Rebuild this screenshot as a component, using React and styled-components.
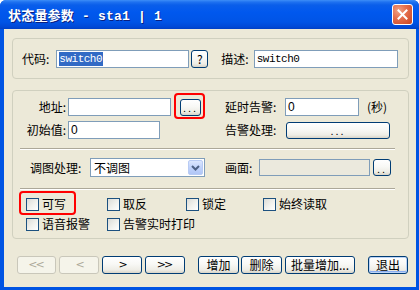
import React from 'react';
import styled, { createGlobalStyle } from 'styled-components';

const GlobalStyle = createGlobalStyle`
  html, body {
    margin: 0;
    padding: 0;
    background: #ffffff;
  }
  body {
    font-family: "Noto Sans CJK SC", sans-serif;
    font-size: 12px;
    color: #000;
  }
`;

const Window = styled.div`
  width: 419px;
  height: 290px;
  display: flex;
  flex-direction: column;
  background: #0054e3;
  border-radius: 6px 6px 0 0;
  overflow: hidden;
`;

const TitleBar = styled.div`
  height: 29px;
  flex: none;
  display: flex;
  align-items: center;
  justify-content: space-between;
  padding: 0 6px 0 8px;
  background: linear-gradient(
    to bottom,
    #3d8ef7 0px,
    #1f72f0 2px,
    #0a5eea 5px,
    #0058ee 12px,
    #0054e6 22px,
    #0048d6 27px,
    #003fc4 29px
  );
`;

const Title = styled.div`
  color: #ffffff;
  font-family: "Liberation Mono", "Noto Sans CJK SC", monospace;
  font-weight: bold;
  font-size: 13px;
  letter-spacing: 0.2px;
  text-shadow: 1px 1px 0 #0a1f80;
  white-space: pre;
`;

const CloseButton = styled.div`
  width: 21px;
  height: 21px;
  box-sizing: border-box;
  border: 1px solid #ffffff;
  border-radius: 3px;
  background: radial-gradient(circle at 30% 30%, #f0a386 0%, #e5704f 40%, #c9421f 100%);
  display: flex;
  align-items: center;
  justify-content: center;
`;

const Client = styled.div`
  flex: 1;
  margin: 0 3px 3px 4px;
  background: #ece9d8;
  padding: 9px 7px 0 8px;
  display: flex;
  flex-direction: column;
`;

const Group = styled.div`
  box-sizing: border-box;
  border: 1px solid #d0d0bf;
  border-radius: 4px;
  height: ${(p) => p.$h}px;
  margin-top: ${(p) => p.$mt || 0}px;
`;

const TopGroup = styled(Group)`
  display: flex;
  align-items: center;
  padding: 0 10px 0 9px;
`;

const MainGroup = styled(Group)`
  display: flex;
  flex-direction: column;
  padding: 7px 13px 0 7px;
`;

const Row = styled.div`
  display: flex;
  align-items: center;
  height: ${(p) => p.$h || 18}px;
  margin-top: ${(p) => p.$mt || 0}px;
  padding-left: ${(p) => p.$pl || 0}px;
`;

const Cell = styled.div`
  display: flex;
  align-items: center;
  width: ${(p) => (p.$w ? `${p.$w}px` : 'auto')};
  flex: ${(p) => (p.$w ? 'none' : '1')};
`;

const Label = styled.span`
  display: inline-block;
  width: ${(p) => (p.$w ? `${p.$w}px` : 'auto')};
  text-align: ${(p) => (p.$right ? 'right' : 'left')};
  margin-left: ${(p) => p.$ml || 0}px;
  margin-right: ${(p) => p.$mr || 0}px;
  white-space: nowrap;
  line-height: 16px;
  flex: none;
`;

const Field = styled.div`
  box-sizing: border-box;
  width: ${(p) => p.$w}px;
  height: ${(p) => p.$h || 18}px;
  margin-left: ${(p) => p.$ml || 0}px;
  border: 1px solid #7f9db9;
  background: ${(p) => (p.$disabled ? '#ebe9dd' : '#ffffff')};
  display: flex;
  align-items: center;
  padding-left: 2px;
  flex: none;
  font-family: ${(p) =>
    p.$mono ? '"Liberation Mono", monospace' : '"Liberation Sans", sans-serif'};
  font-size: ${(p) => (p.$mono ? '11px' : '12px')};
  letter-spacing: ${(p) => (p.$mono ? '-0.5px' : '0')};
  white-space: nowrap;
  overflow: hidden;
`;

const Selected = styled.span`
  background: #316ac5;
  color: #ffffff;
  line-height: 14px;
  padding-right: 1px;
`;

const Button = styled.div`
  box-sizing: border-box;
  position: relative;
  width: ${(p) => p.$w}px;
  height: ${(p) => p.$h || 18}px;
  margin-left: ${(p) => p.$ml || 0}px;
  border: 1px solid ${(p) => (p.$disabled ? '#c9c7ba' : '#003c74')};
  border-radius: 3px;
  background: ${(p) =>
    p.$disabled
      ? '#f5f4ea'
      : 'linear-gradient(to bottom, #ffffff 0%, #f8f8f5 45%, #eeede6 80%, #d8d4c8 100%)'};
  color: ${(p) => (p.$disabled ? '#aca899' : '#000000')};
  box-shadow: ${(p) =>
    p.$default ? 'inset 0 0 0 1px #bcd4f6, inset 0 -1px 0 1px #89adf0' : 'none'};
  display: flex;
  align-items: center;
  justify-content: center;
  flex: none;
  white-space: nowrap;
  line-height: 14px;
  font-size: 12px;
`;

const Dots = styled.span`
  font-family: "Liberation Sans", sans-serif;
  letter-spacing: 2px;
  font-size: 11px;
  margin-top: 2px;
`;

const Arrow = styled.span`
  font-family: "DejaVu Sans", sans-serif;
  font-size: 11px;
  letter-spacing: -2px;
  margin-left: ${(p) => (p.$double ? '-2px' : '0')};
`;

const Highlight = styled.div`
  position: absolute;
  left: ${(p) => p.$l}px;
  top: ${(p) => p.$t}px;
  right: ${(p) => p.$r}px;
  bottom: ${(p) => p.$b}px;
  border: 2px solid #ff0000;
  border-radius: 4px;
  pointer-events: none;
`;

const Anchor = styled.div`
  position: relative;
  display: flex;
  align-items: center;
  margin-left: ${(p) => p.$ml || 0}px;
`;

const Select = styled.div`
  box-sizing: border-box;
  width: ${(p) => p.$w}px;
  height: 19px;
  border: 1px solid #7f9db9;
  background: #ffffff;
  display: flex;
  align-items: center;
  justify-content: space-between;
  padding: 0 1px 0 3px;
  flex: none;
`;

const SelectArrow = styled.div`
  width: 15px;
  height: 15px;
  box-sizing: border-box;
  border: 1px solid #b8cbf4;
  border-radius: 2px;
  background: linear-gradient(to bottom, #dbe6fe 0%, #c1d3fb 50%, #b1c6f6 100%);
  display: flex;
  align-items: center;
  justify-content: center;
`;

const Separator = styled.div`
  height: 0;
  border-top: 1px solid #aca899;
  border-bottom: 1px solid #ffffff;
  margin-top: ${(p) => p.$mt}px;
`;

const CheckGrid = styled.div`
  display: grid;
  grid-template-columns: 81px 79px 77px 1fr;
  grid-auto-rows: 16px;
  row-gap: 4px;
  padding-left: 6px;
  margin-top: 6px;
`;

const CheckItem = styled.div`
  position: relative;
  display: flex;
  align-items: center;
  justify-self: start;
  grid-column: ${(p) => p.$col || 'auto'};
`;

const Box = styled.span`
  width: 13px;
  height: 13px;
  box-sizing: border-box;
  border: 1px solid #1c5180;
  background: linear-gradient(135deg, #dcdcd7 0%, #f2f2ee 55%, #ffffff 100%);
  margin-right: 3px;
  flex: none;
`;

const ButtonBar = styled.div`
  display: flex;
  align-items: center;
  margin-top: 17px;
  padding-left: 5px;
  gap: 3px;
`;

const Check = ({ children, col, marked }) => (
  <CheckItem $col={col}>
    <Box />
    <Label>{children}</Label>
    {marked && <Highlight $l={-7} $t={-5} $r={-10} $b={-3} />}
  </CheckItem>
);

export default function App() {
  return (
    <>
      <GlobalStyle />
      <Window>
        <TitleBar>
          <Title>状态量参数 - sta1 | 1</Title>
          <CloseButton>
            <svg width="11" height="11" viewBox="0 0 11 11">
              <path d="M1.5 1.5 L9.5 9.5 M9.5 1.5 L1.5 9.5" stroke="#ffffff" strokeWidth="2" strokeLinecap="square" />
            </svg>
          </CloseButton>
        </TitleBar>
        <Client>
          <TopGroup $h={41}>
            <Label>代码:</Label>
            <Field $w={133} $ml={7} $mono>
              <Selected>switch0</Selected>
            </Field>
            <Button $w={17} $ml={2}>?</Button>
            <Label $ml={13}>描述:</Label>
            <Field $w={144} $ml={5} $mono>switch0</Field>
          </TopGroup>

          <MainGroup $h={149} $mt={11}>
            <Row>
              <Cell $w={205}>
                <Label $w={46} $right>地址:</Label>
                <Field $w={103} $ml={2} />
                <Anchor $ml={9}>
                  <Button $w={21} $h={17}><Dots>...</Dots></Button>
                  <Highlight $l={-6} $t={-6} $r={-4} $b={-3} />
                </Anchor>
              </Cell>
              <Cell>
                <Label $w={60}>延时告警:</Label>
                <Field $w={74}>0</Field>
                <Label $ml={8}>(秒)</Label>
              </Cell>
            </Row>
            <Row $mt={5}>
              <Cell $w={205}>
                <Label $w={46} $right>初始值:</Label>
                <Field $w={92} $ml={2}>0</Field>
              </Cell>
              <Cell>
                <Label $w={61}>告警处理:</Label>
                <Button $w={104} $h={17}><Dots>...</Dots></Button>
              </Cell>
            </Row>

            <Separator $mt={9} />

            <Row $h={19} $mt={8} $pl={10}>
              <Cell $w={195}>
                <Label $w={60}>调图处理:</Label>
                <Select $w={115}>
                  <span>不调图</span>
                  <SelectArrow>
                    <svg width="9" height="6" viewBox="0 0 9 6">
                      <path d="M1 1 L4.5 4.5 L8 1" fill="none" stroke="#4d6185" strokeWidth="2" />
                    </svg>
                  </SelectArrow>
                </Select>
              </Cell>
              <Cell>
                <Label $w={34}>画面:</Label>
                <Field $w={111} $h={17} $disabled />
                <Button $w={18} $h={17} $ml={3}><Dots>..</Dots></Button>
              </Cell>
            </Row>

            <Separator $mt={11} />

            <CheckGrid>
              <Check marked>可写</Check>
              <Check>取反</Check>
              <Check>锁定</Check>
              <Check>始终读取</Check>
              <Check col="1">语音报警</Check>
              <Check col="2 / span 2">告警实时打印</Check>
            </CheckGrid>
          </MainGroup>

          <ButtonBar>
            <Button $w={39} $disabled><Arrow $double>&lt;&lt;</Arrow></Button>
            <Button $w={40} $disabled><Arrow>&lt;</Arrow></Button>
            <Button $w={40}><Arrow>&gt;</Arrow></Button>
            <Button $w={40}><Arrow $double>&gt;&gt;</Arrow></Button>
            <Button $w={41} $ml={10}>增加</Button>
            <Button $w={41} $ml={-1}>删除</Button>
            <Button $w={70}>批量增加...</Button>
            <Button $w={40} $ml={10} $default>退出</Button>
          </ButtonBar>
        </Client>
      </Window>
    </>
  );
}
